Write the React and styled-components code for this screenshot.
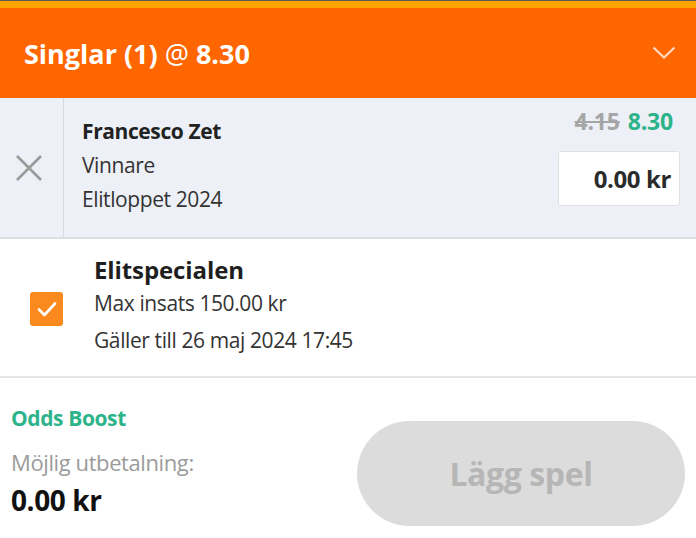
import React from "react";
import styled, { createGlobalStyle } from "styled-components";

const Global = createGlobalStyle`
  html, body { margin: 0; padding: 0; background: #fff; }
  body { font-family: "Open Sans", "Noto Sans", sans-serif; }
  * { box-sizing: border-box; }
`;

const Slip = styled.div`
  width: 696px;
  height: 538px;
  display: flex;
  flex-direction: column;
  border-top: 1px solid #5a5a5a;
  overflow: hidden;
`;

const Accent = styled.div`
  height: 7px;
  background: #ffa400;
`;

const Header = styled.div`
  height: 90px;
  background: #ff6600;
  display: flex;
  align-items: center;
  justify-content: space-between;
  padding: 0 20px 0 24px;
  color: #fff;
`;

const HeaderTitle = styled.div`
  font-size: 27px;
  font-weight: 700;
  letter-spacing: 0;
`;

const At = styled.span`
  font-weight: 400;
`;

const BetRow = styled.div`
  height: 141px;
  background: #edf0f6;
  display: flex;
  border-bottom: 2px solid #dcdee2;
`;

const RemoveCell = styled.div`
  width: 64px;
  border-right: 1px solid #d6d9df;
  display: flex;
  align-items: center;
  justify-content: center;
  padding-right: 6px;
`;

const BetInfo = styled.div`
  flex: 1;
  padding: 16px 0 0 18px;
  display: flex;
  flex-direction: column;
`;

const Line = styled.div`
  font-size: ${(p) => p.$size || 21}px;
  font-weight: ${(p) => (p.$bold ? 700 : 400)};
  color: ${(p) => p.$color || "#333"};
  line-height: ${(p) => p.$lh || 34}px;
  letter-spacing: ${(p) => (p.$ls !== undefined ? p.$ls : -0.4)}px;
  white-space: nowrap;
`;

const BetRight = styled.div`
  display: flex;
  flex-direction: column;
  align-items: flex-end;
  padding: 10px 16px 0 0;
`;

const Odds = styled.div`
  font-size: 23px;
  font-weight: 700;
  display: flex;
  gap: 8px;
  padding-right: 7px;
  line-height: 26px;
  letter-spacing: -0.2px;
`;

const OldOdds = styled.span`
  color: #a6a6a6;
  text-decoration: line-through;
`;

const NewOdds = styled.span`
  color: #2db38a;
`;

const StakeBox = styled.div`
  margin-top: 17px;
  width: 122px;
  height: 55px;
  background: #fff;
  border: 1px solid #dfe1e5;
  border-radius: 3px;
  display: flex;
  align-items: center;
  justify-content: flex-end;
  padding-right: 8px;
  font-size: 24px;
  font-weight: 700;
  color: #2b2b2b;
  letter-spacing: -0.4px;
`;

const Promo = styled.div`
  height: 139px;
  display: flex;
  border-bottom: 2px solid #e6e6e6;
`;

const CheckCell = styled.div`
  width: 94px;
  display: flex;
  align-items: center;
  padding-left: 30px;
  padding-top: 3px;
`;

const Checkbox = styled.div`
  width: 33px;
  height: 34px;
  border-radius: 3px;
  background: #fb8a1e;
  display: flex;
  align-items: center;
  justify-content: center;
`;

const PromoText = styled.div`
  padding-top: 16px;
  display: flex;
  flex-direction: column;
`;

const Footer = styled.div`
  flex: 1;
  display: flex;
  justify-content: space-between;
  padding: 24px 11px 0 11px;
`;

const Payout = styled.div`
  display: flex;
  flex-direction: column;
`;

const PlaceButton = styled.button`
  margin-top: 19px;
  width: 328px;
  height: 105px;
  border: none;
  border-radius: 53px;
  background: #dcdcdc;
  color: #b6b6b6;
  font-family: inherit;
  font-size: 32px;
  font-weight: 700;
  letter-spacing: -0.4px;
`;

export default function App() {
  return (
    <>
      <Global />
      <Slip>
        <Accent />
        <Header>
          <HeaderTitle>
            Singlar (1) <At>@</At> 8.30
          </HeaderTitle>
          <svg width="24" height="16" viewBox="0 0 24 16">
            <path d="M1.5 2.5 L12 12.5 L22.5 2.5" fill="none" stroke="#fff" strokeOpacity="0.75" strokeWidth="2.2" />
          </svg>
        </Header>
        <BetRow>
          <RemoveCell>
            <svg width="28" height="28" viewBox="0 0 28 28">
              <path d="M2 2 L26 26 M26 2 L2 26" stroke="#9a9a9a" strokeWidth="2.6" />
            </svg>
          </RemoveCell>
          <BetInfo>
            <Line $bold $color="#222">Francesco Zet</Line>
            <Line>Vinnare</Line>
            <Line>Elitloppet 2024</Line>
          </BetInfo>
          <BetRight>
            <Odds>
              <OldOdds>4.15</OldOdds>
              <NewOdds>8.30</NewOdds>
            </Odds>
            <StakeBox>0.00 kr</StakeBox>
          </BetRight>
        </BetRow>
        <Promo>
          <CheckCell>
            <Checkbox>
              <svg width="20" height="16" viewBox="0 0 20 16">
                <path d="M2 8.5 L7.5 14 L18 2.5" fill="none" stroke="#fff" strokeWidth="2.6" strokeLinecap="round" strokeLinejoin="round" />
              </svg>
            </Checkbox>
          </CheckCell>
          <PromoText>
            <Line $bold $size={24} $color="#1e1e1e" $lh={30} $ls={-0.1}>Elitspecialen</Line>
            <Line $lh={36}>Max insats 150.00 kr</Line>
            <Line $lh={38}>Gäller till 26 maj 2024 17:45</Line>
          </PromoText>
        </Promo>
        <Footer>
          <Payout>
            <Line $bold $color="#2db38a" $lh={32}>Odds Boost</Line>
            <Line $color="#9b9b9b" $size={22} $lh={56}>Möjlig utbetalning:</Line>
            <Line $bold $size={28} $color="#111" $lh={20}>0.00 kr</Line>
          </Payout>
          <PlaceButton disabled>Lägg spel</PlaceButton>
        </Footer>
      </Slip>
    </>
  );
}
